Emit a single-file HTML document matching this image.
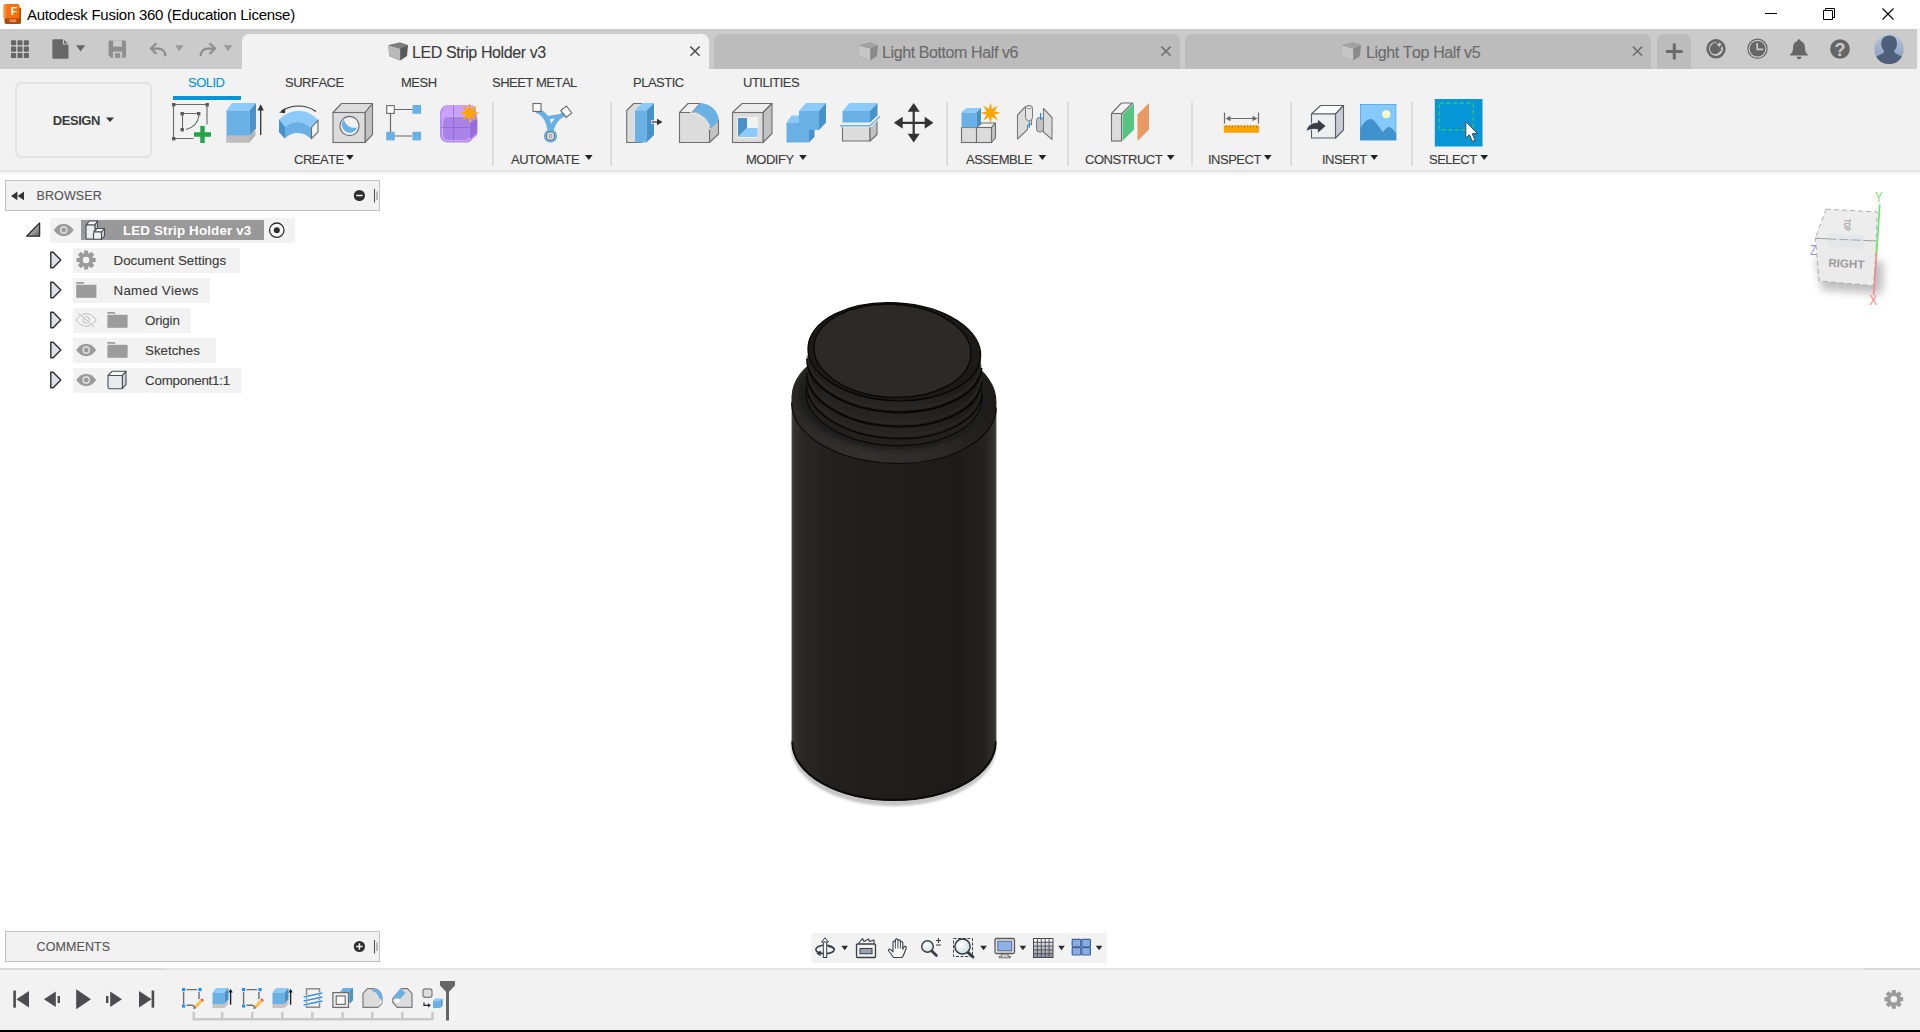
<!DOCTYPE html>
<html lang="en">
<head>
<meta charset="utf-8">
<title>Autodesk Fusion 360 (Education License)</title>
<style>
*{box-sizing:border-box;margin:0;padding:0}
html,body{width:1920px;height:1032px;overflow:hidden;background:#fff}
body{position:relative;font-kerning:none;-webkit-text-stroke:0.12px currentColor;font-family:"Liberation Sans",sans-serif;font-size:12px;color:#3c3c3c}
.abs{position:absolute}
svg{position:absolute;overflow:visible}
#titlebar{position:absolute;left:0;top:0;width:1920px;height:29px;background:#fff}
#title{position:absolute;left:27px;top:5.5px;font-family:"Liberation Sans",sans-serif;font-size:15px;line-height:18px;color:#000;white-space:nowrap;letter-spacing:-0.25px;-webkit-text-stroke:0}
#strip{position:absolute;left:0;top:29px;width:1920px;height:40px;background:linear-gradient(90deg,#cbcbcb 0,#cbcbcb 1917px,#f2f2f2 1917.5px)}
.tab{position:absolute;top:5px;height:35px;border-radius:7px 7px 0 0;background:#bcbcbc}
.tab.active{background:#f2f2f2}
.tab .lbl{position:absolute;top:9.5px;font-size:16px;line-height:18px;white-space:nowrap;color:#6b6b6b;letter-spacing:-0.4px}
.tab.active .lbl{color:#3c3c3c}
#toolbar{position:absolute;left:0;top:69px;width:1920px;height:101px;background:#f2f2f2}
#tbline{position:absolute;left:0;top:170px;width:1920px;height:5px;background:linear-gradient(#e4e4e4 0,#e4e4e4 2px,#f5f5f5 2px,#f8f8f8 5px)}
.rtab{position:absolute;top:7.3px;font-size:13px;letter-spacing:-0.5px;line-height:14px;white-space:nowrap;color:#3c3c3c}
.grp{position:absolute;top:83.5px;font-size:13px;letter-spacing:-0.5px;line-height:14px;white-space:nowrap;color:#3c3c3c}
.grp i{display:inline-block;width:0;height:0;border-left:3.9px solid transparent;border-right:3.9px solid transparent;border-top:4.9px solid #222;margin-left:4.2px;vertical-align:4.1px}
.sep{position:absolute;top:33px;width:2px;height:64px;background:#dcdcdc;margin-left:-0.5px}
#design{position:absolute;left:14.5px;top:12.7px;width:137.5px;height:76.6px;border:2px solid #e2e2e2;border-radius:6px;background:#f2f2f2}
#design span{position:absolute;left:36.3px;top:30.8px;font-weight:bold;font-size:13px;line-height:14px;color:#3c3c3c;letter-spacing:-0.45px;-webkit-text-stroke:0}
.panelhdr{position:absolute;left:5px;width:375px;height:31px;background:#f2f2f2;border:1px solid #c2c2c2}
.panelhdr .t{position:absolute;left:30.5px;top:7.5px;font-size:12.5px;line-height:14px;color:#555;letter-spacing:0.1px}
.row{position:absolute;height:24px;background:#f2f2f2}
.row .t{position:absolute;top:5px;font-size:12px;line-height:14px;white-space:nowrap;color:#3c3c3c}
.bt{font-size:13.33px;line-height:16px;white-space:nowrap;color:#3c3c3c}
#timeline{position:absolute;left:0;top:968px;width:1920px;height:62px;background:linear-gradient(90deg,#dadada 0,#dadada 167px,#e7e7e7 167.5px,#e7e7e7 1863.5px,#dadada 1864px) top/100% 2px no-repeat,#f2f2f2}
#blackbar{position:absolute;left:0;top:1030px;width:1920px;height:2px;background:#000}
#navbar{position:absolute;left:811px;top:933px;width:296px;height:30px;background:#f2f2f2}
</style>
</head>
<body>
<div id="titlebar">
  <div id="title">Autodesk Fusion 360 (Education License)</div>
</div>
<div id="strip">
  <div class="tab active" style="left:242px;width:467px"><span class="lbl" style="left:170px">LED Strip Holder v3</span></div>
  <div class="tab" style="left:714px;width:466px"><span class="lbl" style="left:168px">Light Bottom Half v6</span></div>
  <div class="tab" style="left:1185px;width:466px"><span class="lbl" style="left:181px">Light Top Half v5</span></div>
  <div class="tab" style="left:1657px;width:34px"></div>
</div>
<div id="toolbar">
  <div id="design"><span>DESIGN</span></div>
  <span class="rtab" style="left:188px;color:#0a96d7">SOLID</span>
  <div class="abs" style="left:173px;top:27px;width:67.5px;height:4px;background:#0696d7"></div>
  <span class="rtab" style="left:285px">SURFACE</span>
  <span class="rtab" style="left:401px">MESH</span>
  <span class="rtab" style="left:492px">SHEET METAL</span>
  <span class="rtab" style="left:633px">PLASTIC</span>
  <span class="rtab" style="left:743px">UTILITIES</span>
  <span class="grp" style="left:294px">CREATE</span>
  <span class="grp" style="left:511px">AUTOMATE</span>
  <span class="grp" style="left:746px">MODIFY</span>
  <span class="grp" style="left:966px">ASSEMBLE</span>
  <span class="grp" style="left:1085px">CONSTRUCT</span>
  <span class="grp" style="left:1208px">INSPECT</span>
  <span class="grp" style="left:1322px">INSERT</span>
  <span class="grp" style="left:1429px">SELECT</span>
  <div class="sep" style="left:492px"></div>
  <div class="sep" style="left:610px"></div>
  <div class="sep" style="left:946px"></div>
  <div class="sep" style="left:1067px"></div>
  <div class="sep" style="left:1191px"></div>
  <div class="sep" style="left:1290px"></div>
  <div class="sep" style="left:1411px"></div>
</div>
<div id="tbline"></div>

<div class="panelhdr" style="top:180px"><span class="t">BROWSER</span></div>
<div class="panelhdr" style="top:931px"><span class="t">COMMENTS</span></div>

<div id="browser-rows">
<div class="row" style="left:50px;top:217.5px;width:245px;height:25px"></div>
<div class="abs" style="left:81px;top:220px;width:183px;height:20px;background:#999"></div>
<span class="abs bt" style="left:123px;top:222.6px;font-weight:bold;color:#fff;letter-spacing:0.17px;-webkit-text-stroke:0">LED Strip Holder v3</span>
<div class="row" style="left:73px;top:247.5px;width:167px;height:25px"></div>
<span class="abs bt" style="left:113.5px;top:252.6px">Document Settings</span>
<div class="row" style="left:73px;top:277.5px;width:137px;height:25px"></div>
<span class="abs bt" style="left:113.5px;top:282.6px;letter-spacing:0.28px">Named Views</span>
<div class="row" style="left:73px;top:307.5px;width:118px;height:25px"></div>
<span class="abs bt" style="left:145px;top:312.6px;letter-spacing:-0.15px">Origin</span>
<div class="row" style="left:73px;top:337.5px;width:143px;height:25px"></div>
<span class="abs bt" style="left:145px;top:342.6px">Sketches</span>
<div class="row" style="left:73px;top:367.5px;width:168px;height:25px"></div>
<span class="abs bt" style="left:145px;top:372.6px;letter-spacing:-0.2px">Component1:1</span>
</div><!--/rows-->
<div id="navbar"></div>
<div id="timeline"></div>
<div id="blackbar"></div>
<svg id="ico" width="1920" height="1032" viewBox="0 0 1920 1032" style="left:0;top:0;pointer-events:none">
<g id="g-title">
<defs><linearGradient id="lgF" x1="0" y1="0" x2="1" y2="0"><stop offset="0" stop-color="#ffa55c"/><stop offset="0.25" stop-color="#ff7410"/><stop offset="1" stop-color="#ff6a00"/></linearGradient></defs>
<path d="M19 7.2l2 1V22.5a1.5 1.5 0 0 1-1.5 1.5H6.2A1.7 1.7 0 0 1 4.5 22.3V17.5H19Z" fill="#b34a0a"/>
<path d="M5.2 4H17.6a1.8 1.8 0 0 1 1.8 1.8V18.2H3.2V6a2 2 0 0 1 2-2Z" fill="url(#lgF)"/>
<text x="10.8" y="15.1" font-family="Liberation Sans, sans-serif" font-weight="bold" font-size="10.6" fill="#fff" style="-webkit-text-stroke:0">F</text>
<text x="9.3" y="22.3" font-family="Liberation Sans, sans-serif" font-weight="bold" font-size="4.2" fill="#f3c7a6" style="-webkit-text-stroke:0">360</text>
<path d="M1765 13.5h12" stroke="#000" stroke-width="1"/>
<path d="M1823.5 10.5h9v9h-9z M1825.5 10.5v-2h9v9h-2" fill="none" stroke="#000" stroke-width="1"/>
<path d="M1882.5 8.5l11 11M1893.5 8.5l-11 11" stroke="#000" stroke-width="1.1"/>
</g>
<g id="g-strip">
<rect x="11.0" y="40.2" width="5.1" height="5.1" rx="0.8" fill="#666"/><rect x="17.4" y="40.2" width="5.1" height="5.1" rx="0.8" fill="#666"/><rect x="23.8" y="40.2" width="5.1" height="5.1" rx="0.8" fill="#666"/><rect x="11.0" y="46.6" width="5.1" height="5.1" rx="0.8" fill="#666"/><rect x="17.4" y="46.6" width="5.1" height="5.1" rx="0.8" fill="#666"/><rect x="23.8" y="46.6" width="5.1" height="5.1" rx="0.8" fill="#666"/><rect x="11.0" y="53.0" width="5.1" height="5.1" rx="0.8" fill="#666"/><rect x="17.4" y="53.0" width="5.1" height="5.1" rx="0.8" fill="#666"/><rect x="23.8" y="53.0" width="5.1" height="5.1" rx="0.8" fill="#666"/>
<path d="M53.5 39.2h9.2l5.8 5.8v12.6a1.2 1.2 0 0 1-1.2 1.2H53.5a1.2 1.2 0 0 1-1.2-1.2V40.4a1.2 1.2 0 0 1 1.2-1.2Z" fill="#686868"/><path d="M63.5 39.2v4.8h4.8" fill="#686868" stroke="#cbcbcb" stroke-width="1.1"/>
<path d="M76 45.2h9.2l-4.6 6.2z" fill="#686868"/>
<path d="M109.8 40.4h15a1.2 1.2 0 0 1 1.2 1.2v15a1.2 1.2 0 0 1-1.2 1.2h-13.6l-2.6-2.6V41.6a1.2 1.2 0 0 1 1.2-1.2Z" fill="#8e8e8e"/><rect x="113.2" y="40.4" width="8.6" height="6.2" fill="#cbcbcb"/><rect x="114.4" y="41.6" width="6.6" height="3.8" fill="#8e8e8e" opacity="0"/><rect x="113" y="51.6" width="9.2" height="6.2" fill="#cbcbcb"/><rect x="115" y="53.2" width="5.2" height="4.6" fill="#8e8e8e"/>
<path d="M156.5 43.2l-5.6 5.4l5.6 5.4" fill="none" stroke="#8e8e8e" stroke-width="2.2" stroke-linejoin="miter"/><path d="M151.6 48.6h6.4c4.6 0 7.4 3 7.4 7.6" fill="none" stroke="#8e8e8e" stroke-width="2.2"/>
<path d="M175 45.2h8.6l-4.3 6z" fill="#999"/>
<path d="M209.5 43.2l5.6 5.4l-5.6 5.4" fill="none" stroke="#8e8e8e" stroke-width="2.2"/><path d="M214.4 48.6h-6.4c-4.6 0-7.4 3-7.4 7.6" fill="none" stroke="#8e8e8e" stroke-width="2.2"/>
<path d="M223.8 45.2h8.6l-4.3 6z" fill="#999"/>
<g transform="translate(388 42)"><path d="M0.5 3.2L12 0.6L20 3.2L19 14L12.2 18.6L1.2 14Z" fill="#5a5a5a"/><path d="M0.5 3.2L12.2 6.5L12.2 18.6L1.2 14Z" fill="#b9b9b9"/><path d="M0.5 3.2L12 0.6L20 3.2L12.2 6.5Z" fill="#7d7d7d"/></g><path d="M690.4 46.6l9.2 9.2M699.6 46.6l-9.2 9.2" stroke="#555" stroke-width="1.6" fill="none"/>
<g transform="translate(858 42)"><path d="M0.5 3.2L12 0.6L20 3.2L19 14L12.2 18.6L1.2 14Z" fill="#8a8a8a"/><path d="M0.5 3.2L12.2 6.5L12.2 18.6L1.2 14Z" fill="#c6c6c6"/><path d="M0.5 3.2L12 0.6L20 3.2L12.2 6.5Z" fill="#a2a2a2"/></g><path d="M1161.4 46.6l9.2 9.2M1170.6 46.6l-9.2 9.2" stroke="#707070" stroke-width="1.6" fill="none"/>
<g transform="translate(1341 42)"><path d="M0.5 3.2L12 0.6L20 3.2L19 14L12.2 18.6L1.2 14Z" fill="#8a8a8a"/><path d="M0.5 3.2L12.2 6.5L12.2 18.6L1.2 14Z" fill="#c6c6c6"/><path d="M0.5 3.2L12 0.6L20 3.2L12.2 6.5Z" fill="#a2a2a2"/></g><path d="M1632.9 46.6l9.2 9.2M1642.1 46.6l-9.2 9.2" stroke="#707070" stroke-width="1.6" fill="none"/>
<path d="M1666 51.4h16.6M1674.3 43.4v16" stroke="#6a6a6a" stroke-width="3" fill="none"/>
<circle cx="1716" cy="48.8" r="8.4" fill="none" stroke="#666" stroke-width="2.6"/><path d="M1709.5 47.5l6-6l2.2 2.2l2.6-2.6l1.6 1.6l-2.6 2.6l2.2 2.2l-6 6z" fill="#666" opacity="0"/><path d="M1711.4 45.2a5.2 5.2 0 0 0 7.4 7.4l3-3l-7.4-7.4z" fill="#666"/><path d="M1716.2 44l3.2-3.2M1719.8 47.6l3.2-3.2" stroke="#666" stroke-width="2"/><path d="M1705.5 53.5l4 4.5" stroke="#cbcbcb" stroke-width="2.6"/>
<circle cx="1757.5" cy="48.8" r="9.6" fill="none" stroke="#666" stroke-width="1.2"/><circle cx="1757.5" cy="48.8" r="7.8" fill="#666"/><path d="M1757.2 43v6.4h6" fill="none" stroke="#cbcbcb" stroke-width="1.6"/>
<path d="M1799 39.2c1 0 1.6 0.8 1.6 1.8c3 1 4.4 3.6 4.4 7c0 3.4 0.8 5 2.8 6.6v0.8h-17.6v-0.8c2-1.6 2.8-3.2 2.8-6.6c0-3.4 1.4-6 4.4-7c0-1 0.6-1.8 1.6-1.8Z" fill="#666"/><path d="M1796.6 56.8h4.8a2.4 2.4 0 0 1-4.8 0Z" fill="#666"/>
<circle cx="1840" cy="49" r="9.8" fill="#666"/><text x="1840" y="55.6" text-anchor="middle" font-family="Liberation Sans, sans-serif" font-weight="bold" font-size="18" fill="#cbcbcb" style="-webkit-text-stroke:0">?</text>
<defs><linearGradient id="lgAv" x1="0" y1="0" x2="0" y2="1"><stop offset="0" stop-color="#b9c6dc"/><stop offset="1" stop-color="#8497b8"/></linearGradient><clipPath id="cpAv"><circle cx="1889" cy="49.2" r="14.8"/></clipPath></defs><circle cx="1889" cy="49.2" r="14.8" fill="url(#lgAv)"/><g clip-path="url(#cpAv)"><path d="M1889.5 35.5c5 0 7.5 3.6 7.5 8c0 3-1 5.2-2.6 6.8c-0.6 1.4 0 2.6 1.8 3.4c4 1.6 6.8 3 8 6v6h-30v-6c1.2-3 4-4.4 8-6c1.8-0.8 2.2-2 1.6-3.4c-1.6-1.6-2.6-3.8-2.6-6.8c0-4.4 3-8 8.3-8Z" fill="#4f5f7a"/></g>
</g>
<g id="g-arrows"><path d="M346.1 155.1h7.6l-3.8 4.8z" fill="#222"/><path d="M585 155.1h7.6l-3.8 4.8z" fill="#222"/><path d="M799.1 155.1h7.6l-3.8 4.8z" fill="#222"/><path d="M1038.6 155.1h7.6l-3.8 4.8z" fill="#222"/><path d="M1166.9 155.1h7.6l-3.8 4.8z" fill="#222"/><path d="M1264 155.1h7.6l-3.8 4.8z" fill="#222"/><path d="M1370.4 155.1h7.6l-3.8 4.8z" fill="#222"/><path d="M1480.4 155.1h7.6l-3.8 4.8z" fill="#222"/></g><g id="g-toolbar">
<path d="M106 117.4h8l-4 4.6z" fill="#333"/>
<g fill="none" stroke="#6a6a6a" stroke-width="1.1"><path d="M173.5 104.5h33.5v20M173.5 104.5v34h20"/><path d="M182.5 113.5h16M182.5 113.5v16"/><path d="M186 129.5c8-2 12-7 13-14"/></g><rect x="172" y="103" width="3.4" height="3.4" fill="#5a5a5a"/><rect x="205.5" y="103" width="3.4" height="3.4" fill="#5a5a5a"/><rect x="172" y="137" width="3.4" height="3.4" fill="#5a5a5a"/><rect x="180.5" y="112" width="3.4" height="3.4" fill="#5a5a5a"/><rect x="197" y="112" width="3.4" height="3.4" fill="#5a5a5a"/><rect x="180.5" y="128" width="3.4" height="3.4" fill="#5a5a5a"/><path d="M194 134.5h17M202.5 126v17" stroke="#22a447" stroke-width="4.4" fill="none"/>
<path d="M226.5 135.5h23l6-6v6l-6 7h-23z" fill="#b4b4b4"/><path d="M226.5 135.5h23v7h-23z" fill="#bdbdbd"/><path d="M226.5 110.5l5.5-7.5h24l-6.5 7.5z" fill="#8ccafa"/><path d="M226.5 110.5h23v25h-23z" fill="#69b0e4"/><path d="M249.5 110.5l6.5-7.5v25.5l-6.5 7z" fill="#4892cc"/><path d="M260.7 108v27" stroke="#333" stroke-width="1.3"/><path d="M257.6 110.5l3.1-6.3l3.1 6.3z" fill="#333"/>
<path d="M279 119.5c6-6 12.5-8.5 20.5-8.5c7 0 13 3 19 9.5l-7.5 7.5c-4-4-8-6-13-6c-5 0-9 1.5-13 5z" fill="#8ccafa"/><path d="M279 119.5l6 7.5c4-3.5 8-5 13-5c5 0 9 2 13 6v11c-4-4-8-6-13-6c-5 0-9 1.5-13 5.5l-6-6.5z" fill="#69b0e4"/><path d="M279 119.5l6 7.5v11.5l-6-6.5z" fill="#4892cc"/><path d="M311.5 127.5l6.5-7v11.5l-6.5 6.5z" fill="#f4f4f4" stroke="#6a6a6a" stroke-width="1.1"/><path d="M281.5 111c10-6.5 24-7 34.5 0.5" fill="none" stroke="#333" stroke-width="1.1"/><path d="M279.2 112.6l6.2-4.4l-0.4 5z" fill="#333"/>
<path d="M333 112.5l8.5-9h31l-7.5 9z" fill="#dcdcdc" stroke="#6e6e6e" stroke-width="1.1" stroke-linejoin="round"/><path d="M365 112.5l7.5-9v31l-7.5 8z" fill="#c2c2c2" stroke="#6e6e6e" stroke-width="1.1" stroke-linejoin="round"/><rect x="333" y="112.5" width="32" height="30" fill="#dcdcdc" stroke="#6e6e6e" stroke-width="1.1"/><circle cx="349.5" cy="126" r="9.6" fill="#f0f0f0" stroke="#6a6a6a" stroke-width="1.1"/><path d="M343.8 119.5a8 8 0 1 0 13.6 7.8c-6 2-11.5-1.5-13.6-7.8z" fill="#69b0e4"/>
<path d="M395 109.5h17.5M390.5 114v18M395 136h17.5" stroke="#6a6a6a" stroke-width="1.2" fill="none"/><rect x="386.7" y="105.6" width="7.6" height="7.8" fill="#fafafa" stroke="#6a6a6a" stroke-width="1.1"/><rect x="412.5" y="105" width="8.6" height="8.8" fill="#69b0e4"/><rect x="386.2" y="131.8" width="8.6" height="8.6" fill="#69b0e4"/><rect x="412.5" y="131.8" width="8.6" height="8.6" fill="#69b0e4"/>
<defs><linearGradient id="lgP" x1="0" y1="0" x2="0" y2="1"><stop offset="0" stop-color="#c79cff"/><stop offset="1" stop-color="#a884ea"/></linearGradient></defs><path d="M448 105h22c4 0 6 3 6 6l1.5 9v12c0 2.5-1 4-3 5l-4 4c-1.2 1-2.6 1.5-4 1.5h-19c-4 0-7.5-3.5-7.5-7.5v-21c0-5 3-9 8-9z" fill="#b58af2"/><path d="M448 105h22c3 0 5 1.5 5.5 4.5l-4 6.5h-25c-3 0-5 2-5.5 5c0-7 0.5-15 7-16z" fill="#c9a2ff"/><rect x="442.5" y="116.5" width="28" height="24" rx="5" fill="#a982ea" stroke="#cdb0ff" stroke-width="1.2"/><path d="M470 123l7-5v14.5l-7 6.5z" fill="#9670d8"/><path d="M453.5 105.5v35.5M441 127.5h29" stroke="#8a66cc" stroke-width="0.9" fill="none" opacity="0.8"/><path d="M469.5 102.5 L471.1 109.1 L476.9 105.6 L473.4 111.4 L480.0 113.0 L473.4 114.6 L476.9 120.4 L471.1 116.9 L469.5 123.5 L467.9 116.9 L462.1 120.4 L465.6 114.6 L459.0 113.0 L465.6 111.4 L462.1 105.6 L467.9 109.1Z" fill="#ffa400"/>
<g fill="none" stroke="#69b0e4" stroke-linecap="butt"><path d="M536.5 110.5C545 113 549.5 122 550.5 134" stroke-width="5.2"/><path d="M565 113.5C557.5 117 552 124 550.5 134" stroke-width="4.6"/><path d="M545 118.2L560 115.8" stroke-width="3.4"/></g><circle cx="550.5" cy="136" r="6.6" fill="#69b0e4"/><circle cx="550.5" cy="136" r="4.1" fill="#e8e8e8" stroke="#6a6a6a" stroke-width="1"/><circle cx="550.5" cy="136" r="1.6" fill="none" stroke="#6a6a6a" stroke-width="0.8"/><rect x="533" y="103.5" width="8" height="8" fill="#fafafa" stroke="#6a6a6a" stroke-width="1.1"/><path d="M560.8 110.5l5.6-4.5l5.4 7l-5.6 4.4z" fill="#fafafa" stroke="#6a6a6a" stroke-width="1.1"/>
<path d="M626.7 110.5l7-7h8v39h-15z" fill="#dcdcdc" stroke="#6e6e6e" stroke-width="1.1" stroke-linejoin="round"/><path d="M635 110.5l7-7.5h12l-7.5 7.5z" fill="#8ccafa"/><rect x="635" y="110.5" width="11.5" height="32" fill="#69b0e4"/><path d="M646.5 110.5l7.5-7.5v32l-7.5 7.5z" fill="#4892cc"/><path d="M651 122h8" stroke="#f2f2f2" stroke-width="3.4"/><path d="M651.5 122h7" stroke="#333" stroke-width="1.2"/><path d="M657 118.8l5.5 3.2l-5.5 3.2z" fill="#333"/>
<path d="M679.5 112.5l8.5-9h12l-8 9z" fill="#f0f0f0" stroke="#6e6e6e" stroke-width="1.1" stroke-linejoin="round"/><path d="M709.5 128l9-8v14l-9 8.5z" fill="#c2c2c2" stroke="#6e6e6e" stroke-width="1.1" stroke-linejoin="round"/><path d="M679.5 112.5h10c11 0 20 7 20 18.5v11.5h-30z" fill="#dcdcdc" stroke="#6e6e6e" stroke-width="1.1" stroke-linejoin="round"/><path d="M692.5 111.5l8.5-8.5c10 1 17 8 18 17l-8.5 8.5c-1.5-9-8-15.5-18-17z" fill="#69b0e4"/><path d="M690 113c10.5 0.5 18.5 7 19.5 16.5" fill="none" stroke="#f0f0f0" stroke-width="1.3"/>
<path d="M732.5 112.5l9.5-9h30l-9 9z" fill="#ececec" stroke="#6e6e6e" stroke-width="1.1" stroke-linejoin="round"/><path d="M763 112.5l9-9v30l-9 9z" fill="#c2c2c2" stroke="#6e6e6e" stroke-width="1.1" stroke-linejoin="round"/><rect x="732.5" y="112.5" width="30.5" height="30" fill="#dcdcdc" stroke="#6e6e6e" stroke-width="1.1"/><rect x="737" y="117" width="21" height="21" fill="#f2f2f2"/><path d="M738 118h9v10l-9 9z" fill="#4892cc"/><path d="M738 137l9-9h10.5v9z" fill="#8ccafa"/>
<path d="M799 111l7-8h20l-7 8z" fill="#8ccafa"/><path d="M786.5 122.5l5-7h8v7z" fill="#8ccafa"/><path d="M786.5 122.5h12.5v-11.5h20v19h-10v12.5h-22.5z" fill="#69b0e4"/><path d="M819 111l7-8v19.5l-7 7.5z" fill="#4892cc"/><path d="M809 130h5.5v7l-5.5 5.5z" fill="#4892cc"/>
<path d="M842.5 126h27.5v15h-27.5z" fill="#dcdcdc" stroke="#6e6e6e" stroke-width="1.1"/><path d="M870 126l7-6.5v15l-7 6.5z" fill="#c2c2c2" stroke="#6e6e6e" stroke-width="1.1" stroke-linejoin="round"/><path d="M840 125.5h30l10-9" stroke="#f2f2f2" stroke-width="3.6" fill="none"/><path d="M840 125.8h30l10-9.3" stroke="#69b0e4" stroke-width="1.4" fill="none"/><path d="M842.5 111l7-8h28l-7.5 8z" fill="#8ccafa"/><rect x="842.5" y="111" width="27.5" height="11.5" fill="#69b0e4"/><path d="M870 111l7.5-8v12.5l-7.5 7z" fill="#4892cc"/>
<path d="M900.7 122.8h26M913.7 109.8v26" stroke="#333" stroke-width="2.2" fill="none"/><path d="M907.7 111.8l6-8.8l6 8.8z M907.7 133.8l6 8.8l6-8.8z M902.7 116.8l-8.8 6l8.8 6z M924.7 116.8l8.8 6l-8.8 6z" fill="#333"/>
<rect x="961.5" y="127.5" width="15" height="15" fill="#dcdcdc" stroke="#6e6e6e" stroke-width="1.1"/><path d="M976.5 127.5l5-4.5h14l-4 4.5z" fill="#f0f0f0" stroke="#6e6e6e" stroke-width="1.1" stroke-linejoin="round"/><rect x="976.5" y="127.5" width="15" height="15" fill="#dcdcdc" stroke="#6e6e6e" stroke-width="1.1"/><path d="M991.5 127.5l4-4.5v15l-4 4.5z" fill="#c2c2c2" stroke="#6e6e6e" stroke-width="1.1" stroke-linejoin="round"/><path d="M961.5 112.5l5-4.5h14.5l-4.5 4.5z" fill="#8ccafa"/><rect x="961.5" y="112.5" width="15" height="15" fill="#69b0e4"/><path d="M976.5 112.5l4.5-4.5v15l-4.5 4.5z" fill="#4892cc"/><path d="M990.5 102.5 L992.1 109.1 L997.9 105.6 L994.4 111.4 L1001.0 113.0 L994.4 114.6 L997.9 120.4 L992.1 116.9 L990.5 123.5 L988.9 116.9 L983.1 120.4 L986.6 114.6 L980.0 113.0 L986.6 111.4 L983.1 105.6 L988.9 109.1Z" fill="#ffa400"/>
<path d="M1017.5 115l8-8.5l6 1v17l-4 1v4l-10 9.5z" fill="#dcdcdc" stroke="#7a7a7a" stroke-width="1.1" stroke-linejoin="round"/><rect x="1025.5" y="105.5" width="7" height="15" rx="3" fill="#e6e6e6" stroke="#7a7a7a" stroke-width="1"/><ellipse cx="1029" cy="107.3" rx="3" ry="1.4" fill="#fafafa" stroke="#7a7a7a" stroke-width="0.8"/><path d="M1043.5 108.5l8.5 9v22l-8.5-7.5z" fill="#dcdcdc" stroke="#7a7a7a" stroke-width="1.1" stroke-linejoin="round"/><rect x="1036.5" y="117.5" width="7" height="14.5" rx="3" fill="#c2c2c2" stroke="#7a7a7a" stroke-width="1"/><path d="M1029.3 121.5v6.5M1040.6 113v7" stroke="#1e8fe0" stroke-width="1.2"/>
<path d="M1111.5 113.5l10-10.5h11l-11 11z" fill="#f4f4f4" stroke="#6e6e6e" stroke-width="1.1" stroke-linejoin="round"/><rect x="1111.5" y="113.5" width="10" height="27.5" fill="#dcdcdc" stroke="#6e6e6e" stroke-width="1.1"/><path d="M1122.5 114.5l11.5-11.5v26.5l-11.5 11.5z" fill="#58c482"/><path d="M1137.5 114.5l11.5-11.5v26.5l-11.5 11.5z" fill="#e89a62"/>
<path d="M1224.5 112.5v11M1258.5 112.5v11M1227 118.5h29" stroke="#6a6a6a" stroke-width="1.2" fill="none"/><path d="M1225.5 118.5l5-2.8v5.6z M1257.5 118.5l-5-2.8v5.6z" fill="#6a6a6a"/><rect x="1223.8" y="125.4" width="35.2" height="7.4" fill="#ffa500"/><path d="M1226.20 125.4v2.6" stroke="#8a5a00" stroke-width="0.8" opacity="0.7"/><path d="M1229.25 125.4v1.6" stroke="#8a5a00" stroke-width="0.8" opacity="0.7"/><path d="M1232.30 125.4v2.6" stroke="#8a5a00" stroke-width="0.8" opacity="0.7"/><path d="M1235.35 125.4v1.6" stroke="#8a5a00" stroke-width="0.8" opacity="0.7"/><path d="M1238.40 125.4v2.6" stroke="#8a5a00" stroke-width="0.8" opacity="0.7"/><path d="M1241.45 125.4v1.6" stroke="#8a5a00" stroke-width="0.8" opacity="0.7"/><path d="M1244.50 125.4v2.6" stroke="#8a5a00" stroke-width="0.8" opacity="0.7"/><path d="M1247.55 125.4v1.6" stroke="#8a5a00" stroke-width="0.8" opacity="0.7"/><path d="M1250.60 125.4v2.6" stroke="#8a5a00" stroke-width="0.8" opacity="0.7"/><path d="M1253.65 125.4v1.6" stroke="#8a5a00" stroke-width="0.8" opacity="0.7"/><path d="M1256.70 125.4v2.6" stroke="#8a5a00" stroke-width="0.8" opacity="0.7"/>
<path d="M1311.5 114l9-8.5h23l-8 8.5z" fill="#fbfbfb" stroke="#5a5e66" stroke-width="1.1" stroke-linejoin="round"/><path d="M1335.5 114l8-8.5v24.5l-8 8z" fill="#c9ccd2" stroke="#5a5e66" stroke-width="1.1" stroke-linejoin="round"/><path d="M1311.5 114h24v24h-24z" fill="#eeeff1" stroke="#5a5e66" stroke-width="1.1"/><path d="M1306 131.5c1.5-6 5-9 11.5-9v-3.5l8.5 7l-8.5 7.5v-4c-5-0.5-8 0-11.5 2z" fill="#3a3d44" stroke="#f2f2f2" stroke-width="0.8"/>
<rect x="1360" y="104" width="36.2" height="36.2" fill="#86cafc"/><path d="M1360 128.5c4-6 7-9.5 10.5-9.5c4.5 0 8 8 12.5 13c2-3 4-5 6-5c2.6 0 4.8 3 7.2 7v6.2h-36.2z" fill="#3f92cc"/><circle cx="1386.3" cy="114.2" r="4" fill="#fdfdc8"/><rect x="1360.3" y="104.3" width="35.6" height="35.6" fill="none" stroke="#4a9ad4" stroke-width="0.6"/>
<rect x="1434.8" y="99" width="47.7" height="47.5" fill="#0696d7"/><rect x="1439.3" y="103.2" width="34" height="26.6" fill="none" stroke="#2ecc71" stroke-width="1.3" stroke-dasharray="4.2 2.6"/><path d="M1465.8 121.5v16.5l3.6-3.2l3 6.6l2.8-1.2l-3-6.4l5-0.4z" fill="#fff" stroke="#444" stroke-width="1" stroke-linejoin="round"/>
</g><!--/TB-->
<g id="g-browser">
<path d="M17.4 191.6v8.6l-6.4-4.3z M24 191.6v8.6l-6.4-4.3z" fill="#333"/><circle cx="359.4" cy="195.5" r="5.6" fill="#2e2e2e"/><path d="M356.2 195.5h6.4" stroke="#f2f2f2" stroke-width="1.5"/><path d="M374.5 189v13.5" stroke="#555" stroke-width="1.1"/><path d="M377 191.5v8.5" stroke="#aaa" stroke-width="1.6"/>
<circle cx="359.4" cy="946.5" r="5.6" fill="#2e2e2e"/><path d="M356.2 946.5h6.4M359.4 943.3v6.4" stroke="#f2f2f2" stroke-width="1.5"/><path d="M374.5 940v13.5" stroke="#555" stroke-width="1.1"/><path d="M377 942.5v8.5" stroke="#aaa" stroke-width="1.6"/>
<defs><linearGradient id="lgTri" x1="0" y1="0" x2="1" y2="1"><stop offset="0.3" stop-color="#c9c9c9"/><stop offset="1" stop-color="#5c5c5c"/></linearGradient></defs><path d="M26.6 236.2h13v-13.2z" fill="url(#lgTri)" stroke="#2e2e2e" stroke-width="1.3" stroke-linejoin="round"/><path d="M53.7 230c3-4.2 6.2-6.2 10-6.2s7 2 10 6.2c-3 4.2-6.2 6.2-10 6.2s-7-2-10-6.2z" fill="#9b9b9b"/><circle cx="63.7" cy="230" r="3.9" fill="#d9d9d9"/><circle cx="63.7" cy="230" r="2.3" fill="#9b9b9b"/><path d="M86 225l3.5-4h8l-2.5 4z" fill="#f8f8fa" stroke="#4a4d55" stroke-width="1.1" stroke-linejoin="round"/><path d="M95 225l2.5-4v8l-2.5 3z" fill="#d4d6dc" stroke="#4a4d55" stroke-width="1.1" stroke-linejoin="round"/><rect x="86" y="225" width="9" height="14" rx="1.4" fill="#e9eaee" stroke="#4a4d55" stroke-width="1.1"/><path d="M93.5 232l3.5-3.5h7.5l-3 3.5z" fill="#f8f8fa" stroke="#4a4d55" stroke-width="1.1" stroke-linejoin="round"/><path d="M101.5 232l3-3.5v7.5l-3 3.5z" fill="#d4d6dc" stroke="#4a4d55" stroke-width="1.1" stroke-linejoin="round"/><rect x="93.5" y="232" width="8" height="7.2" rx="1.2" fill="#eeeff2" stroke="#4a4d55" stroke-width="1.1"/><path d="M86.5 232h7" stroke="#f8f8fa" stroke-width="0.8"/><circle cx="276.8" cy="230.2" r="7.2" fill="#fafafa" stroke="#2e2e2e" stroke-width="1.3"/><circle cx="276.8" cy="230.2" r="3" fill="#2e2e2e"/>
<path d="M50.8 252.3h2.4l7.6 7.7l-7.6 7.7h-2.4z" fill="#dfe1e6" stroke="#2e2e2e" stroke-width="1.4" stroke-linejoin="round"/><path d="M50.8 282.3h2.4l7.6 7.7l-7.6 7.7h-2.4z" fill="#dfe1e6" stroke="#2e2e2e" stroke-width="1.4" stroke-linejoin="round"/><path d="M50.8 312.3h2.4l7.6 7.7l-7.6 7.7h-2.4z" fill="#dfe1e6" stroke="#2e2e2e" stroke-width="1.4" stroke-linejoin="round"/><path d="M50.8 342.3h2.4l7.6 7.7l-7.6 7.7h-2.4z" fill="#dfe1e6" stroke="#2e2e2e" stroke-width="1.4" stroke-linejoin="round"/><path d="M50.8 372.3h2.4l7.6 7.7l-7.6 7.7h-2.4z" fill="#dfe1e6" stroke="#2e2e2e" stroke-width="1.4" stroke-linejoin="round"/><path d="M83.86 253.37 L84.06 250.42 L88.14 250.42 L88.34 253.37 L89.21 253.73 L91.43 251.78 L94.32 254.67 L92.37 256.89 L92.73 257.76 L95.68 257.96 L95.68 262.04 L92.73 262.24 L92.37 263.11 L94.32 265.33 L91.43 268.22 L89.21 266.27 L88.34 266.63 L88.14 269.58 L84.06 269.58 L83.86 266.63 L82.99 266.27 L80.77 268.22 L77.88 265.33 L79.83 263.11 L79.47 262.24 L76.52 262.04 L76.52 257.96 L79.47 257.76 L79.83 256.89 L77.88 254.67 L80.77 251.78 L82.99 253.73Z M89.4 260a3.3 3.3 0 1 0 -6.6 0a3.3 3.3 0 1 0 6.6 0Z" fill="#9b9b9b" fill-rule="evenodd"/><path d="M76.2 282h7l1.4 1.8h-8.4z" fill="#9b9b9b"/><rect x="76.2" y="284.8" width="20.2" height="13" fill="#9b9b9b"/><path d="M76.2 320c3-4.2 6.2-6.2 10-6.2s7 2 10 6.2c-3 4.2-6.2 6.2-10 6.2s-7-2-10-6.2z" fill="none" stroke="#b9b9b9" stroke-width="1"/><circle cx="86.2" cy="320" r="3.3" fill="none" stroke="#b9b9b9" stroke-width="1"/><path d="M78.7 313.5l15 13" stroke="#f2f2f2" stroke-width="2.6"/><path d="M78.7 313.5l15 13" stroke="#b0b0b0" stroke-width="1"/><path d="M107.4 312h7l1.4 1.8h-8.4z" fill="#9b9b9b"/><rect x="107.4" y="314.8" width="20.2" height="13" fill="#9b9b9b"/><path d="M76.2 350c3-4.2 6.2-6.2 10-6.2s7 2 10 6.2c-3 4.2-6.2 6.2-10 6.2s-7-2-10-6.2z" fill="#9b9b9b"/><circle cx="86.2" cy="350" r="3.9" fill="#d9d9d9"/><circle cx="86.2" cy="350" r="2.3" fill="#9b9b9b"/><path d="M107.4 342h7l1.4 1.8h-8.4z" fill="#9b9b9b"/><rect x="107.4" y="344.8" width="20.2" height="13" fill="#9b9b9b"/><path d="M76.2 380c3-4.2 6.2-6.2 10-6.2s7 2 10 6.2c-3 4.2-6.2 6.2-10 6.2s-7-2-10-6.2z" fill="#9b9b9b"/><circle cx="86.2" cy="380" r="3.9" fill="#d9d9d9"/><circle cx="86.2" cy="380" r="2.3" fill="#9b9b9b"/><path d="M108 375.5l4-4.2h14l-3.6 4.2z" fill="#f6f6f8" stroke="#4a4d55" stroke-width="1.1" stroke-linejoin="round"/><path d="M122.4 375.5l3.6-4.2v13l-3.6 4.4z" fill="#d4d6dc" stroke="#4a4d55" stroke-width="1.1" stroke-linejoin="round"/><rect x="108" y="375.5" width="14.4" height="13.2" rx="1.6" fill="#e9eaee" stroke="#4a4d55" stroke-width="1.1"/>
</g><!--/BR-->
<g id="g-canvas">
<defs><linearGradient id="lgBody" x1="0" y1="0" x2="1" y2="0"><stop offset="0" stop-color="#4a4944"/><stop offset="0.012" stop-color="#33322f"/><stop offset="0.05" stop-color="#292826"/><stop offset="0.18" stop-color="#222120"/><stop offset="0.5" stop-color="#1f1e1c"/><stop offset="0.8" stop-color="#1c1b19"/><stop offset="0.94" stop-color="#232221"/><stop offset="0.985" stop-color="#2f2f2d"/><stop offset="1" stop-color="#444441"/></linearGradient><linearGradient id="lgFil" x1="0" y1="0" x2="1" y2="0"><stop offset="0" stop-color="#2a2926"/><stop offset="0.35" stop-color="#32312d"/><stop offset="0.75" stop-color="#2b2a27"/><stop offset="1" stop-color="#1d1c1a"/></linearGradient><linearGradient id="lgNeck" x1="0" y1="0" x2="1" y2="0"><stop offset="0" stop-color="#1a1917"/><stop offset="0.12" stop-color="#242321"/><stop offset="0.6" stop-color="#262523"/><stop offset="1" stop-color="#1b1a18"/></linearGradient><filter id="fB1" x="-10%" y="-10%" width="120%" height="120%"><feGaussianBlur stdDeviation="1.2"/></filter><filter id="fB2" x="-10%" y="-10%" width="120%" height="120%"><feGaussianBlur stdDeviation="2.2"/></filter></defs>
<ellipse cx="893.6" cy="747.6" rx="102.6" ry="58.6" fill="#c6c6c6" filter="url(#fB1)"/>
<path d="M791.6 395.7L791.6 742.5A102.4 58.3 0 0 0 996.4 742.5L996.4 401.7Z" fill="url(#lgBody)"/>
<path d="M792.4 741.5L792.4 742.5A101.6 57.5 0 0 0 995.6 742.5L995.6 741.5" fill="none" stroke="#0a0a09" stroke-width="2" opacity="0.95"/>
<ellipse cx="894" cy="398.7" rx="102.4" ry="58.5" transform="rotate(1.7 894 398.7)" fill="url(#lgFil)"/><ellipse cx="894" cy="405.5" rx="102.4" ry="58.5" transform="rotate(1.7 894 405.5)" fill="url(#lgFil)"/>
<ellipse cx="894" cy="397" rx="96" ry="53" transform="rotate(1.9 894 397)" fill="#1d1c1a" filter="url(#fB2)"/>
<path d="M791.65 402.46A102.4 58.5 1.7 0 0 996.35 408.54" fill="none" stroke="#090908" stroke-width="1.1"/>
<ellipse cx="894" cy="395.3" rx="88.2" ry="50.2" transform="rotate(2.6 894 395.3)" fill="#222120" stroke="#080807" stroke-width="1.1"/>
<path d="M808.03 346.95L807.11 384.79A87.2 49.2 2.9 0 0 981.29 393.61L980.57 356.45Z" fill="url(#lgNeck)"/>
<path d="M807.03 384.57A87.4 49.46 3.1 0 0 981.57 394.03" fill="none" stroke="#070706" stroke-width="1.5"/><path d="M808.03 381.43A86.4 48.9 3.1 0 0 980.57 390.77" fill="none" stroke="#2c2b28" stroke-width="2.6" opacity="0.55"/>
<path d="M807.03 372.57A87.4 49.46 3.1 0 0 981.57 382.03" fill="none" stroke="#070706" stroke-width="2.0"/><path d="M808.03 369.43A86.4 48.9 3.1 0 0 980.57 378.77" fill="none" stroke="#2c2b28" stroke-width="2.6" opacity="0.55"/>
<path d="M807.23 358.38A87.2 49.348 3.1 0 0 981.37 367.82" fill="none" stroke="#070706" stroke-width="2.2"/><path d="M808.03 355.23A86.4 48.9 3.1 0 0 980.57 364.57" fill="none" stroke="#2c2b28" stroke-width="2.6" opacity="0.55"/>
<ellipse cx="894.3" cy="351.7" rx="86.4" ry="48.9" transform="rotate(3.15 894.3 351.7)" fill="#1b1a18" stroke="#060605" stroke-width="1.3"/>
<ellipse cx="892.4" cy="350.8" rx="78.5" ry="46.5" transform="rotate(3.1 892.4 350.8)" fill="#2b2a28" stroke="#060605" stroke-width="1.2"/>
</g><!--/CV--><g id="g-vc"><defs><filter id="fVc" x="-30%" y="-30%" width="160%" height="160%"><feGaussianBlur stdDeviation="4"/></filter></defs><path d="M1816 258L1884 262L1882 294L1822 290Z" fill="#b8b8b8" filter="url(#fVc)" opacity="0.9"/><path d="M1826.1 209.2L1877 211.9L1876.6 241L1815.3 238.3Z" fill="#ededed" stroke="#a8a8a8" stroke-width="0.9" stroke-dasharray="5 3" stroke-linejoin="round"/><path d="M1815.3 238.3L1876.6 241L1873.6 285.8L1819.3 281Z" fill="#ebebeb" stroke="#a8a8a8" stroke-width="0.9" stroke-dasharray="5 3" stroke-linejoin="round"/><path d="M1827.5 233.5L1865 235.5L1864 248.5L1827 246.5Z" fill="#e4e6ea" opacity="0.9"/><path d="M1815.3 238.3L1876.6 241" stroke="#a0a0a0" stroke-width="0.9" stroke-dasharray="9 3"/><text transform="translate(1828.2 266.8) rotate(2.8)" font-family="Liberation Sans, sans-serif" font-weight="bold" font-size="11.6" fill="#9c9c9c" style="-webkit-text-stroke:0">RIGHT</text><text transform="translate(1844 219) rotate(92) scale(0.6 1)" font-family="Liberation Sans, sans-serif" font-weight="bold" font-size="9.5" fill="#a6a6a6" style="-webkit-text-stroke:0">TOP</text><path d="M1879.7 204.4L1876.6 253.3" stroke="#6ce86c" stroke-width="1.8"/><path d="M1876.6 253.3L1873.6 295.3" stroke="#f08a8a" stroke-width="1.6"/><text transform="translate(1874.9 201.7) scale(0.76 1)" font-family="Liberation Sans, sans-serif" font-size="15" fill="#6fe46f" style="-webkit-text-stroke:0">Y</text><text transform="translate(1869.5 304.8) scale(0.8 1)" font-family="Liberation Sans, sans-serif" font-size="15" fill="#f28a8a" style="-webkit-text-stroke:0">X</text><text transform="translate(1810.3 255.3) scale(0.68 1)" font-family="Liberation Sans, sans-serif" font-size="15" fill="#8c8cff" style="-webkit-text-stroke:0">Z</text></g><!--/VC-->
<g id="g-nav">
<ellipse cx="825" cy="949.5" rx="9.2" ry="4.2" fill="none" stroke="#3a3d46" stroke-width="1.6"/><path d="M816.5 953.5l4.2-3.2v6z" fill="#3a3d46"/><rect x="823.3" y="941.5" width="3.4" height="16" fill="#f4f4f4" stroke="#3a3d46" stroke-width="1"/><path d="M821.5 942l3.5-4.2l3.5 4.2z" fill="#f4f4f4" stroke="#3a3d46" stroke-width="1"/><path d="M828 946.2c3 0.4 5.6 1.6 6.2 3.2" fill="none" stroke="#3a3d46" stroke-width="1.6"/><path d="M841.4 945.8h6.6l-3.3 4.4z" fill="#2a2a2a"/><rect x="856.5" y="944" width="19" height="13.5" rx="1" fill="#f0f0f0" stroke="#3a3d46" stroke-width="1.3"/><rect x="860" y="948.5" width="12" height="5.2" fill="#9aa0b0" stroke="#3a3d46" stroke-width="1"/><path d="M858.5 943.5l4-5l1.5 3l4.5-2.5l1 2.5l4.5-1.5v3.5" fill="none" stroke="#3a3d46" stroke-width="1.1" stroke-linejoin="round"/><path d="M893.5 957.5c-1.5-2-3-4.5-4.8-6.5c-1-1.4 0.6-2.6 2-1.4l2.3 2.2v-9.5c0-1.6 2.4-1.6 2.4 0v-2.2c0-1.6 2.5-1.6 2.5 0v1c0-1.6 2.5-1.6 2.5 0v1.6c0-1.5 2.4-1.5 2.4 0v6.5l1.2-2.2c0.8-1.4 2.8-0.6 2.2 1l-2.2 6c-0.6 1.8-1.4 2.6-2.2 3.5z" fill="#fafafa" stroke="#3a3d46" stroke-width="1.1" stroke-linejoin="round"/><path d="M895.4 942.5v6M897.9 941.5v7M900.4 943v5.5" stroke="#3a3d46" stroke-width="0.9"/><defs><radialGradient id="rgLens" cx="0.4" cy="0.35" r="0.7"><stop offset="0" stop-color="#ffffff"/><stop offset="1" stop-color="#c9dedd"/></radialGradient></defs><circle cx="927.5" cy="946.5" r="5.8" fill="url(#rgLens)" stroke="#3a3d46" stroke-width="1.4"/><path d="M931.8 951l4.6 4.6" stroke="#3a3d46" stroke-width="2.8" stroke-linecap="round"/><path d="M936 940.5h5M938.5 938v5M936 945h5" stroke="#3a3d46" stroke-width="1.1"/><rect x="953.5" y="938.5" width="19" height="18" fill="none" stroke="#3a3d46" stroke-width="1" stroke-dasharray="3 1.6"/><circle cx="962.5" cy="946.5" r="7.6" fill="url(#rgLens)" stroke="#3a3d46" stroke-width="1.5"/><path d="M968.2 952.6l4.8 4.4" stroke="#3a3d46" stroke-width="3" stroke-linecap="round"/><path d="M980.2 945.8h6.6l-3.3 4.4z" fill="#2a2a2a"/><rect x="995" y="938.5" width="19.5" height="15" rx="1.5" fill="#e8e8e8" stroke="#5a5a5a" stroke-width="1.3"/><rect x="997.8" y="941.2" width="14" height="9.6" fill="#8fb2e6" stroke="#4a5f8a" stroke-width="0.9"/><path d="M1001.5 954v2.4h-2.4v1.4h11.4v-1.4h-2.4v-2.4z" fill="#d0d0d0" stroke="#5a5a5a" stroke-width="0.8"/><path d="M1019.6 945.8h6.6l-3.3 4.4z" fill="#2a2a2a"/><defs><linearGradient id="lgGrid" x1="0" y1="0" x2="0" y2="1"><stop offset="0" stop-color="#ffffff"/><stop offset="1" stop-color="#8a8fa6"/></linearGradient></defs><rect x="1033.5" y="938.5" width="19.5" height="19" fill="url(#lgGrid)" stroke="#4a4a4a" stroke-width="1"/><path d="M1037.4 938.5v19M1033.5 942.3h19.5M1041.3 938.5v19M1033.5 946.1h19.5M1045.2 938.5v19M1033.5 949.9h19.5M1049.1 938.5v19M1033.5 953.7h19.5" stroke="#4a4a4a" stroke-width="0.9" fill="none"/><path d="M1058.2 945.8h6.6l-3.3 4.4z" fill="#2a2a2a"/><rect x="1072.2" y="939.4" width="8.6" height="7.4" rx="0.8" fill="#8fb2e6" stroke="#3f5f9e" stroke-width="1.2"/><rect x="1074.5" y="941.6" width="4" height="3" fill="none" stroke="#7f9fd8" stroke-width="0.7"/><rect x="1081.8" y="939.4" width="8.6" height="7.4" rx="0.8" fill="#8fb2e6" stroke="#3f5f9e" stroke-width="1.2"/><rect x="1084.1" y="941.6" width="4" height="3" fill="none" stroke="#7f9fd8" stroke-width="0.7"/><rect x="1072.2" y="947.6" width="8.6" height="7.4" rx="0.8" fill="#8fb2e6" stroke="#3f5f9e" stroke-width="1.2"/><rect x="1074.5" y="949.8" width="4" height="3" fill="none" stroke="#7f9fd8" stroke-width="0.7"/><rect x="1081.8" y="947.6" width="8.6" height="7.4" rx="0.8" fill="#8fb2e6" stroke="#3f5f9e" stroke-width="1.2"/><rect x="1084.1" y="949.8" width="4" height="3" fill="none" stroke="#7f9fd8" stroke-width="0.7"/><path d="M1095.8 945.8h6.6l-3.3 4.4z" fill="#2a2a2a"/>
</g><!--/NV-->
<g id="g-tl">
<rect x="13.3" y="990.5" width="2.6" height="17.2" fill="#4d4d4f"/><path d="M29 991v16.4l-12.6-8.2z" fill="#4d4d4f"/><path d="M55.8 991.5v15.6l-11.8-7.8z" fill="#4d4d4f"/><rect x="57.6" y="996" width="2.4" height="7" fill="#4d4d4f"/><path d="M76.2 989.2v20l14.8-10z" fill="#4d4d4f"/><rect x="106" y="996" width="2.4" height="7" fill="#4d4d4f"/><path d="M110.2 991.5v15.6l11.8-7.8z" fill="#4d4d4f"/><path d="M139 991v16.4l12.6-8.2z" fill="#4d4d4f"/><rect x="151.6" y="990.5" width="2.6" height="17.2" fill="#4d4d4f"/>
<path d="M193.75 1012v7.2H433.75M222.2 1012v7.2M252.3 1012v7.2M282.3 1012v7.2M312.3 1012v7.2M342.5 1012v7.2M372.3 1012v7.2M402.3 1012v7.2M432.5 1012v7.2" fill="none" stroke="#c9c9c9" stroke-width="2.5"/>
<path d="M186.5 989.6h10.5M183.6 992v12M199 992v7M186.5 1005.2h6l2.4 2" fill="none" stroke="#6e6e6e" stroke-width="1.4"/><rect x="182" y="988" width="3.2" height="3.2" fill="#1e90ff"/><rect x="198.4" y="988" width="3.2" height="3.2" fill="#1e90ff"/><rect x="182" y="1004.4" width="3.2" height="3.2" fill="#1e90ff"/><path d="M194.2 1006l6.2-6.4l2.2 2.2l-6.2 6.4z" fill="#fbbf4a"/><path d="M200.4 999.6l1-1c1.2 0 2.2 1 2.2 2.2l-1 1z" fill="#ff4a4a"/><path d="M194.2 1006l2.2 2.2l-3.2 0.8z" fill="#666"/><path d="M212.5 1004h12l4-3.5v3.5l-4 4h-12z" fill="#c4c4c4"/><path d="M212.5 992.5l3.5-4.5h12.5l-4 4.5z" fill="#8ccafa"/><rect x="212.5" y="992.5" width="12" height="11.5" fill="#69b0e4"/><path d="M224.5 992.5l4-4.5v11.5l-4 4.5z" fill="#4892cc"/><path d="M230.6 991.5v13.2" stroke="#222" stroke-width="1.4"/><path d="M228.4 992.6l2.2-3.8l2.2 3.8z" fill="#222"/><path d="M246.5 989.6h10.5M243.6 992v12M259 992v7M246.5 1005.2h6l2.4 2" fill="none" stroke="#6e6e6e" stroke-width="1.4"/><rect x="242" y="988" width="3.2" height="3.2" fill="#1e90ff"/><rect x="258.4" y="988" width="3.2" height="3.2" fill="#1e90ff"/><rect x="242" y="1004.4" width="3.2" height="3.2" fill="#1e90ff"/><path d="M254.2 1006l6.2-6.4l2.2 2.2l-6.2 6.4z" fill="#fbbf4a"/><path d="M260.4 999.6l1-1c1.2 0 2.2 1 2.2 2.2l-1 1z" fill="#ff4a4a"/><path d="M254.2 1006l2.2 2.2l-3.2 0.8z" fill="#666"/><path d="M272.5 1004h12l4-3.5v3.5l-4 4h-12z" fill="#c4c4c4"/><path d="M272.5 992.5l3.5-4.5h12.5l-4 4.5z" fill="#8ccafa"/><rect x="272.5" y="992.5" width="12" height="11.5" fill="#69b0e4"/><path d="M284.5 992.5l4-4.5v11.5l-4 4.5z" fill="#4892cc"/><path d="M290.6 991.5v13.2" stroke="#222" stroke-width="1.4"/><path d="M288.4 992.6l2.2-3.8l2.2 3.8z" fill="#222"/>
<rect x="306.5" y="988.8" width="13" height="18.4" fill="none" stroke="#8a8a8a" stroke-width="1.5"/><path d="M303.6 997.1l18.8-4" stroke="#f2f2f2" stroke-width="2.6"/><path d="M303.6 997.1l18.8-4" stroke="#3b93de" stroke-width="1.5"/><path d="M303.6 1001.1l18.8-4" stroke="#f2f2f2" stroke-width="2.6"/><path d="M303.6 1001.1l18.8-4" stroke="#3b93de" stroke-width="1.5"/><path d="M303.6 1005.1l18.8-4" stroke="#f2f2f2" stroke-width="2.6"/><path d="M303.6 1005.1l18.8-4" stroke="#3b93de" stroke-width="1.5"/>
<path d="M340 992l3-4h10v12l-3 3z" fill="#69b0e4"/><path d="M350 991l3-3v12l-3 3.5z" fill="#4892cc"/><rect x="332.9" y="992.6" width="15.6" height="14.8" fill="#f0f0f0" stroke="#6e6e6e" stroke-width="1.3"/><rect x="336.2" y="996" width="9" height="8.4" fill="#fafafa" stroke="#6e6e6e" stroke-width="1.2"/>
<path d="M363 1007.4v-14l4.5-4.8h5c6 0 9.5 4.5 9.5 9.5v5l-4 4.3z" fill="#dcdcdc" stroke="#7a7a7a" stroke-width="1.2" stroke-linejoin="round"/><path d="M371.5 990.8l2.5-2.6c5 1 8 4.5 8.4 9l-2.8 2.5c-0.6-4.5-3.5-7.8-8.1-8.9z" fill="#69b0e4"/><path d="M377.5 1007l4.3-4.3v-3z" fill="#f6f6f6"/>
<path d="M397 1007.4l-4.2-5v-3.4l8.5-10.4h6.2l4.5 5v13.8z" fill="#dcdcdc" stroke="#7a7a7a" stroke-width="1.2" stroke-linejoin="round"/><path d="M393.5 996.6l7-8l5 4.2l-7 8.2z" fill="#69b0e4"/><path d="M393.4 1000.5l4.5 3l3-3.5l-3-2z" fill="#f8f8f8"/>
<rect x="423" y="988.8" width="9" height="8.6" rx="2.4" fill="#dedede" stroke="#7a7a7a" stroke-width="1.2"/><path d="M424 1002.5v2.8h4.5" fill="none" stroke="#222" stroke-width="1.2"/><path d="M428 1003.2l2.8 2.1l-2.8 2.1z" fill="#222"/><path d="M433 1001l2-2.6h7.5l-2 2.6z" fill="#8ccafa"/><rect x="433" y="1001" width="7.5" height="7" fill="#69b0e4"/><path d="M440.5 1001l2-2.6v7l-2 2.6z" fill="#4892cc"/>
<path d="M440 981h15v4.4l-6 6.4v28.6h-3v-28.6l-6-6.4z" fill="#666"/>
<path d="M1891.59 992.76 L1891.80 989.91 L1895.80 989.91 L1896.01 992.76 L1896.86 993.12 L1899.02 991.25 L1901.85 994.08 L1899.98 996.24 L1900.34 997.09 L1903.19 997.30 L1903.19 1001.30 L1900.34 1001.51 L1899.98 1002.36 L1901.85 1004.52 L1899.02 1007.35 L1896.86 1005.48 L1896.01 1005.84 L1895.80 1008.69 L1891.80 1008.69 L1891.59 1005.84 L1890.74 1005.48 L1888.58 1007.35 L1885.75 1004.52 L1887.62 1002.36 L1887.26 1001.51 L1884.41 1001.30 L1884.41 997.30 L1887.26 997.09 L1887.62 996.24 L1885.75 994.08 L1888.58 991.25 L1890.74 993.12Z M1897.1 999.3a3.3 3.3 0 1 0 -6.6 0a3.3 3.3 0 1 0 6.6 0Z" fill="#9b9b9b" fill-rule="evenodd"/>
</g><!--/TL-->
</svg>
</body>
</html>
